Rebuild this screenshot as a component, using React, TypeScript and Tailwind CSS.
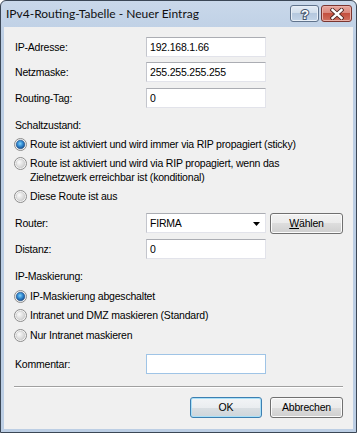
import React from "react";

const ui = "font-['Liberation_Sans',Arial,sans-serif] text-[10.5px] tracking-[-0.2px] leading-[13px] text-black";

const Radio = ({ checked = false }: { checked?: boolean }) => (
  <svg width="13" height="13" viewBox="0 0 13 13" className="shrink-0">
    <defs>
      <radialGradient id="rOff" cx="0.35" cy="0.35" r="0.7">
        <stop offset="0" stopColor="#fbfbfb" />
        <stop offset="1" stopColor="#d0d0d0" />
      </radialGradient>
      <radialGradient id="rOn" cx="0.45" cy="0.4" r="0.65">
        <stop offset="0" stopColor="#7fd3fb" />
        <stop offset="0.5" stopColor="#2f86cf" />
        <stop offset="1" stopColor="#16457f" />
      </radialGradient>
    </defs>
    <circle cx="6.5" cy="6.5" r="6" fill="#f6f6f6" stroke="#8b8b8b" />
    <circle cx="6.5" cy="6.5" r="4.3" fill={checked ? "url(#rOn)" : "url(#rOff)"} stroke={checked ? "#1d4a7e" : "#c4c4c4"} strokeWidth="0.6" />
  </svg>
);

const TextBox = ({ value = "", focus = false }: { value?: string; focus?: boolean }) => (
  <div
    className={
      focus
        ? "w-[120px] h-[20px] bg-white border border-[#9fc4e6] flex items-center pl-[3px]"
        : "w-[120px] h-[20px] bg-white border border-[#e2e3ea] border-t-[#abadb3] border-l-[#c3c5cc] flex items-center pl-[3px]"
    }
  >
    {value}
  </div>
);

const Row = ({ label, mt, children }: { label: string; mt: string; children: React.ReactNode }) => (
  <div className={`flex items-center h-[20px] ${mt}`}>
    <span className="w-[131px]">{label}</span>
    {children}
  </div>
);

const Option = ({ checked, mt, children }: { checked?: boolean; mt: string; children: React.ReactNode }) => (
  <div className={`flex items-start -ml-[1px] gap-[3px] ${mt}`}>
    <div className="h-[13px] flex items-center">
      <Radio checked={checked} />
    </div>
    <div className="leading-[13px]">{children}</div>
  </div>
);

const Button = ({ children, primary = false, w }: { children: React.ReactNode; primary?: boolean; w: string }) => (
  <div
    className={
      primary
        ? `${w} h-[21px] rounded-[3px] border border-[#3c7fb1] shadow-[inset_0_0_0_1px_#a9e0f8] bg-[linear-gradient(#f2f4f6_0%,#eaedf0_50%,#dadfe3_50%,#ced5da_100%)] flex items-center justify-center`
        : `${w} h-[21px] rounded-[3px] border border-[#707070] shadow-[inset_0_0_0_1px_#fbfbfb] bg-[linear-gradient(#f2f2f2_0%,#ebebeb_50%,#dddddd_50%,#cfcfcf_100%)] flex items-center justify-center`
    }
  >
    {children}
  </div>
);

export default function App() {
  return (
    <div className="w-[357px] h-[433px] bg-[linear-gradient(#c9d8ea,#bccee4_40px)] border border-[#3b4756] rounded-t-[6px] flex flex-col px-[3px] pb-[3px]">
      {/* title bar */}
      <div className="h-[26px] flex items-start shrink-0">
        <span className="pl-[2px] mt-[5px] font-['Lato',sans-serif] text-[12px] leading-[16px] text-[#111]">
          IPv4-Routing-Tabelle - Neuer Eintrag
        </span>
        <div className="ml-auto mr-[1px] mt-[4px] flex gap-[2px]">
          <div className="w-[29px] h-[17px] rounded-[3px] border border-[#60738c] shadow-[inset_0_0_0_1px_#e8eff7] bg-[linear-gradient(#e4ecf5_0%,#cfdcea_50%,#b5c8de_50%,#c3d4e7_100%)] flex items-center justify-center">
            <svg width="12" height="14" viewBox="0 0 12 14">
              <text x="6" y="12" textAnchor="middle" fontFamily="Liberation Sans, Arial, sans-serif" fontWeight="bold" fontSize="13" fill="#ffffff" stroke="#42536a" strokeWidth="2" paintOrder="stroke">?</text>
            </svg>
          </div>
          <div className="w-[31px] h-[17px] rounded-[3px] border border-[#7a3530] shadow-[inset_0_0_0_1px_#eab1a9] bg-[linear-gradient(#e8a69c_0%,#d8857a_50%,#c4503f_50%,#d0705f_100%)] flex items-center justify-center">
            <svg width="14" height="12" viewBox="0 0 14 12">
              <path d="M2.5 2 L11.5 10 M11.5 2 L2.5 10" stroke="#4a2320" strokeWidth="4.2" strokeLinecap="square" />
              <path d="M2.5 2 L11.5 10 M11.5 2 L2.5 10" stroke="#ffffff" strokeWidth="2.4" strokeLinecap="square" />
            </svg>
          </div>
        </div>
      </div>

      {/* client area */}
      <div className={`flex-1 bg-[#f0f0f0] flex flex-col pl-[11px] ${ui}`}>
        <Row label="IP-Adresse:" mt="mt-[10px]">
          <TextBox value="192.168.1.66" />
        </Row>
        <Row label="Netzmaske:" mt="mt-[5px]">
          <TextBox value="255.255.255.255" />
        </Row>
        <Row label="Routing-Tag:" mt="mt-[6px]">
          <TextBox value="0" />
        </Row>

        <div className="mt-[11px] h-[13px]">Schaltzustand:</div>
        <Option checked mt="mt-[6px]">Route ist aktiviert und wird immer via RIP propagiert (sticky)</Option>
        <Option mt="mt-[6px]">
          <div className="leading-[14px] -mt-[1px]">
            Route ist aktiviert und wird via RIP propagiert, wenn das
            <br />
            Zielnetzwerk erreichbar ist (konditional)
          </div>
        </Option>
        <Option mt="mt-[6px]">Diese Route ist aus</Option>

        <Row label="Router:" mt="mt-[10px]">
          <div className="w-[120px] h-[20px] bg-white border border-[#e2e3ea] border-t-[#abadb3] border-l-[#c3c5cc] flex items-center justify-between pl-[3px] pr-[5px]">
            <span>FIRMA</span>
            <svg width="7" height="4" viewBox="0 0 7 4" className="mt-[2px]">
              <path d="M0 0 H7 L3.5 4 Z" fill="#000" />
            </svg>
          </div>
          <div className="ml-[4px]">
            <Button w="w-[73px]">
              <span>
                <span className="underline">W</span>ählen
              </span>
            </Button>
          </div>
        </Row>
        <Row label="Distanz:" mt="mt-[6px]">
          <TextBox value="0" />
        </Row>

        <div className="mt-[11px] h-[13px]">IP-Maskierung:</div>
        <Option checked mt="mt-[7px]">IP-Maskierung abgeschaltet</Option>
        <Option mt="mt-[6px]">Intranet und DMZ maskieren (Standard)</Option>
        <Option mt="mt-[7px]">Nur Intranet maskieren</Option>

        <Row label="Kommentar:" mt="mt-[12px]">
          <TextBox focus />
        </Row>

        <div className="mt-[12px] -ml-[1px] w-[329px] h-[2px] border-t border-t-[#a0a0a0] border-b border-b-white" />

        <div className="mt-[9px] flex justify-end gap-[8px] pr-[10px]">
          <Button primary w="w-[72px]">OK</Button>
          <Button w="w-[73px]">Abbrechen</Button>
        </div>
      </div>
    </div>
  );
}
